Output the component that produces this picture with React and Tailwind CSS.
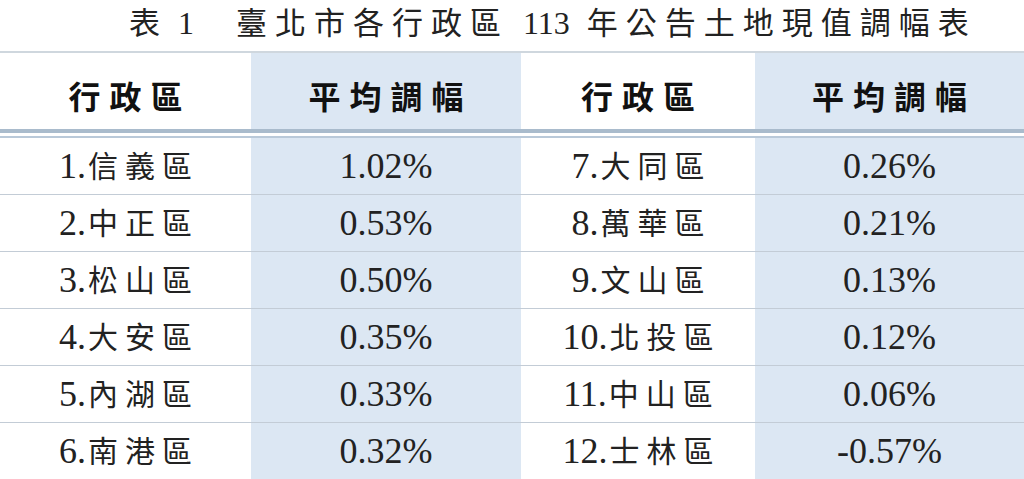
import React from "react";

const left = [
  ["1.", "信義區", "1.02%"],
  ["2.", "中正區", "0.53%"],
  ["3.", "松山區", "0.50%"],
  ["4.", "大安區", "0.35%"],
  ["5.", "內湖區", "0.33%"],
  ["6.", "南港區", "0.32%"],
];
const right = [
  ["7.", "大同區", "0.26%"],
  ["8.", "萬華區", "0.21%"],
  ["9.", "文山區", "0.13%"],
  ["10.", "北投區", "0.12%"],
  ["11.", "中山區", "0.06%"],
  ["12.", "士林區", "-0.57%"],
];

const font = { fontFamily: '"Liberation Serif", "Noto Sans CJK TC", serif' };

function Name({ n, t }) {
  return (
    <div className="flex items-center justify-center">
      <span className="text-[36px]">{n}</span>
      <span className="text-[30px] tracking-[7px] mr-[-7px] ml-[2px]">{t}</span>
    </div>
  );
}

export default function App() {
  return (
    <div className="w-[1024px] h-[479px] overflow-hidden bg-white text-[#222]" style={font}>
      <div className="h-[51px] flex items-center pb-[5px] pl-[129px] text-[31px] leading-none">
        <span>表</span>
        <span className="ml-[18px] text-[32px]">1</span>
        <span className="ml-[42px] tracking-[8px]">臺北市各行政區</span>
        <span className="ml-[14px] text-[32px]">113</span>
        <span className="ml-[17px] tracking-[8px]">年公告土地現值調幅表</span>
      </div>
      <div className="grid grid-cols-[251px_270px_234px_1fr] border-t-2 border-[#cfd7de] h-[78px] text-[32px] font-bold text-[#111]">
        <div className="flex items-center justify-center pt-[14px] tracking-[9px]"><span className="mr-[-9px]">行政區</span></div>
        <div className="flex items-center justify-center pt-[14px] tracking-[9px] bg-[#dce7f3]"><span className="mr-[-9px]">平均調幅</span></div>
        <div className="flex items-center justify-center pt-[14px] tracking-[9px]"><span className="mr-[-9px]">行政區</span></div>
        <div className="flex items-center justify-center pt-[14px] tracking-[9px] bg-[#dce7f3]"><span className="mr-[-9px]">平均調幅</span></div>
      </div>
      <div className="h-[4px] bg-[#a9bbcc]" />
      <div className="h-[3px] bg-white" />
      <div className="h-[2px] bg-[#b9c9d9]" />
      {left.map((l, i) => {
        const r = right[i];
        return (
          <div
            key={i}
            className="grid grid-cols-[251px_270px_234px_1fr] border-b border-[#c3ccd6] h-[57px]"
          >
            <Name n={l[0]} t={l[1]} />
            <div className="flex items-center justify-center bg-[#dce7f3] text-[36px]">{l[2]}</div>
            <Name n={r[0]} t={r[1]} />
            <div className="flex items-center justify-center bg-[#dce7f3] text-[36px]">{r[2]}</div>
          </div>
        );
      })}
    </div>
  );
}
